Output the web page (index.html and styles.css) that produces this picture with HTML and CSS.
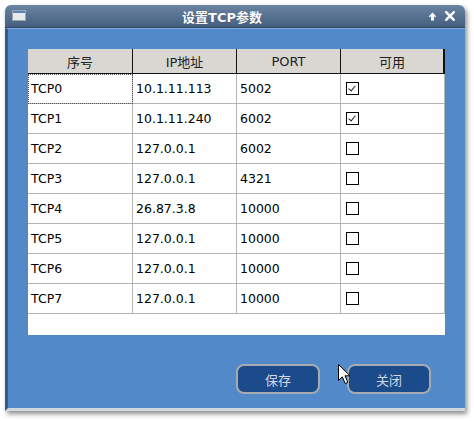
FILE: index.html
```html
<!DOCTYPE html>
<html lang="zh">
<head>
<meta charset="utf-8">
<title>设置TCP参数</title>
<link rel="stylesheet" href="styles.css">
</head>
<body>
<div class="window">
  <div class="titlebar">
    <svg class="ticon" width="14" height="11" viewBox="0 0 14 11"><rect x="0.5" y="0.5" width="13" height="10" fill="#e6eaee" stroke="#9aa6b4"/><rect x="1" y="1" width="12" height="2" fill="#5d84b8"/></svg>
    <div class="title">设置TCP参数</div>
    <div class="tbtns">
      <svg width="9" height="9" viewBox="0 0 9 9"><path d="M4.5 0.5 L8.5 4.8 L6 4.8 L6 8.5 L3 8.5 L3 4.8 L0.5 4.8 Z" fill="#fff"/></svg>
      <svg width="10" height="10" viewBox="0 0 10 10"><path d="M1.2 1.2 L8.8 8.8 M8.8 1.2 L1.2 8.8" stroke="#fff" stroke-width="2.4" stroke-linecap="square"/></svg>
    </div>
  </div>
  <div class="content">
    <div class="tablewrap">
      <div class="grid">
        <div class="th">序号</div><div class="th">IP地址</div><div class="th">PORT</div><div class="th">可用</div>

        <div class="td focus">TCP0</div><div class="td">10.1.11.113</div><div class="td">5002</div><div class="td"><span class="cb on"></span></div>
        <div class="td">TCP1</div><div class="td">10.1.11.240</div><div class="td">6002</div><div class="td"><span class="cb on"></span></div>
        <div class="td">TCP2</div><div class="td">127.0.0.1</div><div class="td">6002</div><div class="td"><span class="cb"></span></div>
        <div class="td">TCP3</div><div class="td">127.0.0.1</div><div class="td">4321</div><div class="td"><span class="cb"></span></div>
        <div class="td">TCP4</div><div class="td">26.87.3.8</div><div class="td">10000</div><div class="td"><span class="cb"></span></div>
        <div class="td">TCP5</div><div class="td">127.0.0.1</div><div class="td">10000</div><div class="td"><span class="cb"></span></div>
        <div class="td">TCP6</div><div class="td">127.0.0.1</div><div class="td">10000</div><div class="td"><span class="cb"></span></div>
        <div class="td">TCP7</div><div class="td">127.0.0.1</div><div class="td">10000</div><div class="td"><span class="cb"></span></div>
      </div>
    </div>
    <div class="buttons">
      <button class="btn">保存</button>
      <button class="btn">关闭</button>
    </div>
  </div>
</div>
<svg class="cursor" width="14" height="21" viewBox="0 0 14 21"><path d="M0.5 0.5 L0.5 16.5 L4.3 12.8 L7.2 19.5 L9.8 18.4 L7 11.8 L12 11.8 Z" fill="#fff" stroke="#000" stroke-width="1" stroke-linejoin="miter"/></svg>
</body>
</html>
```
FILE: styles.css
```css
html, body {
  margin: 0;
  padding: 0;
  background: #ffffff;
}
body {
  font-family: "DejaVu Sans", "Noto Sans CJK SC", sans-serif;
  position: relative;
  width: 474px;
  height: 421px;
  overflow: hidden;
}
.window {
  margin: 5px 0 0 5px;
  width: 460px;
  height: 406px;
  display: flex;
  flex-direction: column;
  border-radius: 6px 6px 0 0;
  box-shadow: 2px 3px 5px rgba(0, 0, 0, 0.45);
}
.titlebar {
  height: 22px;
  flex: none;
  display: flex;
  align-items: center;
  padding: 0 10px 0 7px;
  background: linear-gradient(#6a84a2, #45607f);
  border-bottom: 1px solid #2c4767;
  border-radius: 6px 6px 0 0;
}
.ticon {
  display: block;
  margin-top: -1px;
}
.title {
  flex: 1;
  text-align: center;
  color: #ffffff;
  font-weight: bold;
  font-size: 13px;
  padding-right: 10px;
  font-family: "DejaVu Sans", "Noto Sans CJK SC", sans-serif;
  text-shadow: 0 0 1px rgba(0,0,0,0.3);
}
.tbtns {
  display: flex;
  align-items: center;
  gap: 8px;
}
.tbtns svg { display: block; }
.content {
  flex: 1;
  display: flex;
  flex-direction: column;
  background: #5289c9;
  border-top: 1px solid #7fabdf;
  border-left: 3px solid #35598a;
  border-bottom: 3px solid #d3d7db;
  padding: 20px 0 0 20px;
}
.tablewrap {
  width: 417px;
  height: 286px;
  background: #ffffff;
}
.grid {
  display: grid;
  grid-template-columns: 105px 104px 104px 104px;
}
.th {
  box-sizing: border-box;
  height: 25px;
  background: #d9d7d1;
  border-right: 1px solid #111;
  border-bottom: 1px solid #111;
  font-size: 13px;
  color: #222;
  display: flex;
  align-items: center;
  justify-content: center;
  font-family: "DejaVu Sans", "Noto Sans CJK SC", sans-serif;
}
.th:nth-child(4) { border-right-width: 2px; }
.td {
  box-sizing: border-box;
  height: 30px;
  border-right: 1px solid #b4b4b4;
  border-bottom: 1px solid #b4b4b4;
  font-size: 12.5px;
  color: #000;
  display: flex;
  align-items: center;
  padding-left: 3px;
}
.td.focus {
  outline: 1px dotted #555;
  outline-offset: -1px;
}
.cb {
  box-sizing: border-box;
  width: 13px;
  height: 13px;
  border: 1px solid #000;
  background: #fff;
  margin-left: 2px;
  position: relative;
}
.cb.on::after {
  content: "";
  position: absolute;
  left: 3px;
  top: 1px;
  width: 3px;
  height: 6px;
  border-right: 1.5px solid #222;
  border-bottom: 1.5px solid #222;
  transform: rotate(40deg);
}
.buttons {
  display: flex;
  justify-content: flex-end;
  gap: 27px;
  margin-top: 29px;
  padding-right: 34px;
}
.btn {
  box-sizing: border-box;
  width: 84px;
  height: 30px;
  border: 2px solid #a6abb0;
  border-radius: 8px;
  background: #1b4b8b;
  color: #cfd8e4;
  font-size: 13px;
  font-family: "Noto Sans CJK SC", sans-serif;
  padding: 0;
}
.cursor {
  position: absolute;
  left: 338px;
  top: 364px;
}
```
